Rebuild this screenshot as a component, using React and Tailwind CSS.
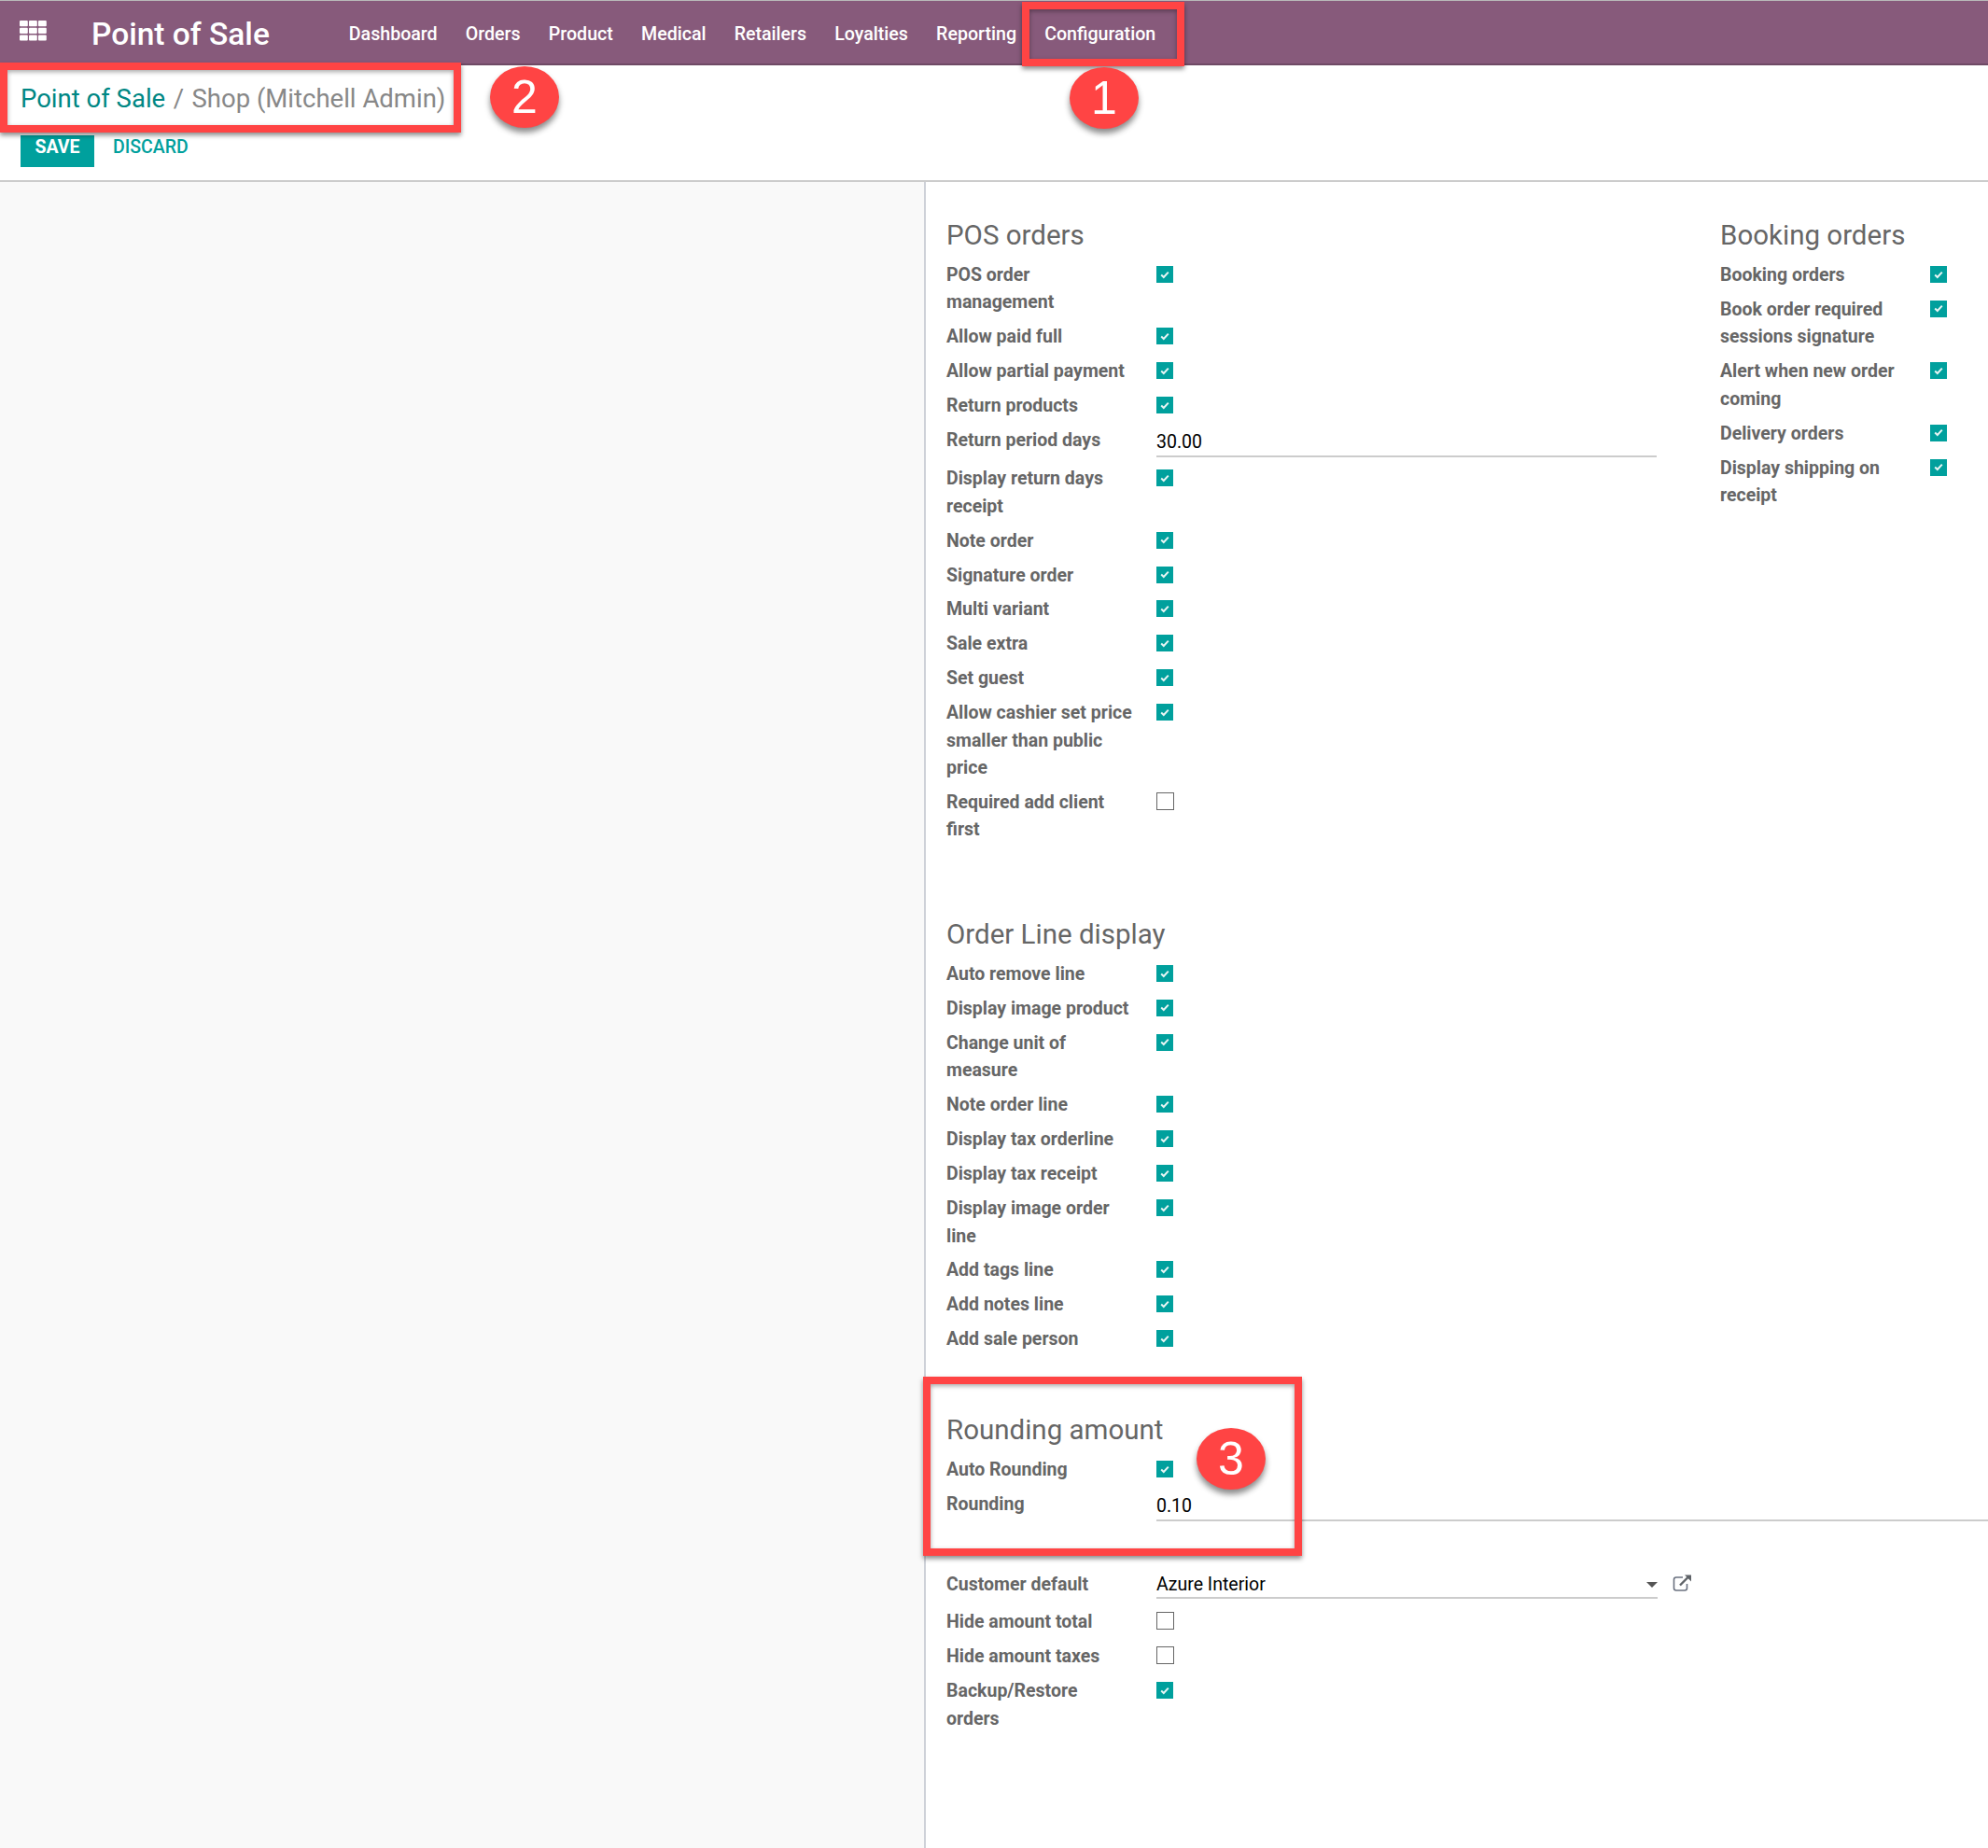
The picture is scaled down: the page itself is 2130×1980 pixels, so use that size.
import React from 'react';

const navItems = ['Dashboard', 'Orders', 'Product', 'Medical', 'Retailers', 'Loyalties', 'Reporting', 'Configuration'];

const posOrders = [
  ['POS order management', true],
  ['Allow paid full', true],
  ['Allow partial payment', true],
  ['Return products', true],
  ['Return period days', '30.00'],
  ['Display return days receipt', true],
  ['Note order', true],
  ['Signature order', true],
  ['Multi variant', true],
  ['Sale extra', true],
  ['Set guest', true],
  ['Allow cashier set price smaller than public price', true],
  ['Required add client first', false],
];

const bookingOrders = [
  ['Booking orders', true],
  ['Book order required sessions signature', true],
  ['Alert when new order coming', true],
  ['Delivery orders', true],
  ['Display shipping on receipt', true],
];

const orderLine = [
  ['Auto remove line', true],
  ['Display image product', true],
  ['Change unit of measure', true],
  ['Note order line', true],
  ['Display tax orderline', true],
  ['Display tax receipt', true],
  ['Display image order line', true],
  ['Add tags line', true],
  ['Add notes line', true],
  ['Add sale person', true],
];

const Checkbox = ({ checked }) =>
  checked ? (
    <div className="mt-[6px] w-[18px] h-[18px] bg-[#00a09d] flex items-center justify-center">
      <svg width="10" height="9" viewBox="0 0 10 9" fill="none">
        <path d="M1.2 4.6 L3.8 7 L8.8 1.6" stroke="#e8f5f4" strokeWidth="2" />
      </svg>
    </div>
  ) : (
    <div className="mt-[5px] w-[19px] h-[19px] bg-white border border-[#666666]" />
  );

const Label = ({ children }) => (
  <div className="w-[200px] mr-[25px] pt-[1px] shrink-0 text-[#666666] font-bold text-[19.5px] leading-[29.3px]">{children}</div>
);

const Row = ({ label, value }) => (
  <div className="flex pb-[6.7px]">
    <Label>{label}</Label>
    <Checkbox checked={value} />
  </div>
);

const InputRow = ({ label, value, width }) => (
  <div className="flex h-[41px]">
    <Label>{label}</Label>
    <div className={`${width} h-[34px] pt-[3px] border-b-2 border-[#cccccc] text-black text-[19.5px] leading-[29px]`}>{value}</div>
  </div>
);

const Rows = ({ items }) =>
  items.map(([label, value]) =>
    typeof value === 'string' ? (
      <InputRow key={label} label={label} value={value} width="w-[537px]" />
    ) : (
      <Row key={label} label={label} value={value} />
    )
  );

const Heading = ({ children }) => (
  <h2 className="h-[40px] mb-[7px] text-[29.5px] leading-[40px] text-[#666666] font-normal">{children}</h2>
);

const Marker = ({ className, children }) => (
  <div className={`absolute w-[74px] h-[66px] rounded-[50%] bg-[#ff4444] text-white text-[50px] leading-none flex items-center justify-center shadow-[0_5px_6px_rgba(0,0,0,0.45)] ${className}`} style={{ fontFamily: '"Liberation Sans", sans-serif' }}>
    {children}
  </div>
);

const Frame = ({ className }) => (
  <div className={`absolute border-[8px] border-[#ff4444] shadow-[0_3px_5px_rgba(0,0,0,0.45),inset_0_2px_5px_rgba(0,0,0,0.35)] ${className}`} />
);

export default function App() {
  return (
    <div className="relative h-[1980px] overflow-hidden bg-white flex flex-col" style={{ fontFamily: 'Roboto, sans-serif' }}>
      {/* Top bar */}
      <div className="h-[70px] shrink-0 bg-[#875a7b] border-t border-[#b9b9b9] border-b-2 border-b-[#6f4a65] flex items-center text-white">
        <svg className="ml-[21px] -mt-[3px]" width="29" height="22" viewBox="0 0 29 22" fill="#ffffff">
          {[0, 1, 2].map((r) =>
            [0, 1, 2].map((c) => <rect key={`${r}-${c}`} x={c * 10} y={r * 7.7} width="8.8" height="6.2" rx="1" />)
          )}
        </svg>
        <div className="ml-[48px] mr-[85px] text-[33.5px] leading-none font-medium mt-[4px]">Point of Sale</div>
        <div className="flex gap-[30.2px] text-[19.6px] font-medium mt-[4px]">
          {navItems.map((item) => (
            <span key={item}>{item}</span>
          ))}
        </div>
      </div>

      {/* Breadcrumb and buttons */}
      <div className="h-[125px] shrink-0 bg-white border-b-2 border-[#cccccc] pl-[22px]">
        <div className="h-[73px] pt-[17px] text-[27.5px] leading-[38px] whitespace-nowrap">
          <span className="text-[#008784]">Point of Sale</span>
          <span className="text-[#888888] mx-[8.5px]">/</span>
          <span className="text-[#888888]">Shop (Mitchell Admin)</span>
        </div>
        <div className="flex items-center gap-[20px]">
          <div className="w-[79px] h-[34px] pb-[9px] bg-[#00a09d] text-white text-[19.5px] font-bold flex items-center justify-center">SAVE</div>
          <div className="pb-[9px] text-[#00a09d] text-[19.5px] font-medium">DISCARD</div>
        </div>
      </div>

      {/* Form */}
      <div className="flex flex-1">
        <div className="w-[990px] shrink-0 bg-[#f9f9f9]" />
        <div className="flex-1 border-l-2 border-[#ced1d8] pl-[22px] pt-[37px] bg-white">
          <div className="flex h-[677px]">
            <div className="w-[761px] shrink-0">
              <Heading>POS orders</Heading>
              <Rows items={posOrders} />
            </div>
            <div className="ml-[68px]">
              <Heading>Booking orders</Heading>
              <Rows items={bookingOrders} />
            </div>
          </div>

          <div className="mt-[72px]">
            <Heading>Order Line display</Heading>
            <Rows items={orderLine} />
          </div>

          <div className="mt-[56px]">
            <Heading>Rounding amount</Heading>
            <Row label="Auto Rounding" value={true} />
            <InputRow label="Rounding" value="0.10" width="w-[891px]" />
          </div>

          <div className="mt-[45px]">
            <div className="flex h-[40px]">
              <Label>Customer default</Label>
              <div className="relative w-[537px] h-[31px] pt-[1px] border-b-2 border-[#cccccc] text-black text-[19.5px] leading-[29px]">
                Azure Interior
                <div className="absolute right-0 top-[13px] w-0 h-0 border-x-[6px] border-x-transparent border-t-[6px] border-t-[#555555]" />
              </div>
              <svg className="ml-[16px] mt-[5px]" width="21" height="19" viewBox="0 0 21 19" fill="none">
                <path d="M11 3 H4 Q1.5 3 1.5 5.5 V14.500 Q1.5 17 4 17 H13 Q15.500 17 15.500 14.500 V10" stroke="#6b7280" strokeWidth="1.6" />
                <path d="M8 11.500 L17 2.500" stroke="#5f6368" strokeWidth="2.400" />
                <path d="M13 0.500 H20 V7.500 Z" fill="#5f6368" />
              </svg>
            </div>
            <Row label="Hide amount total" value={false} />
            <Row label="Hide amount taxes" value={false} />
            <Row label="Backup/Restore orders" value={true} />
          </div>
        </div>
      </div>

      {/* Annotations */}
      <Frame className="left-[1095px] top-[2px] w-[174px] h-[69px]" />
      <Frame className="left-0 top-[67px] w-[494px] h-[75px] border-l-[8px]" />
      <Frame className="left-[989px] top-[1475px] w-[406px] h-[192px]" />
      <Marker className="left-[1146px] top-[72px]">1</Marker>
      <Marker className="left-[525px] top-[71px]">2</Marker>
      <Marker className="left-[1282px] top-[1530px]">3</Marker>
    </div>
  );
}
